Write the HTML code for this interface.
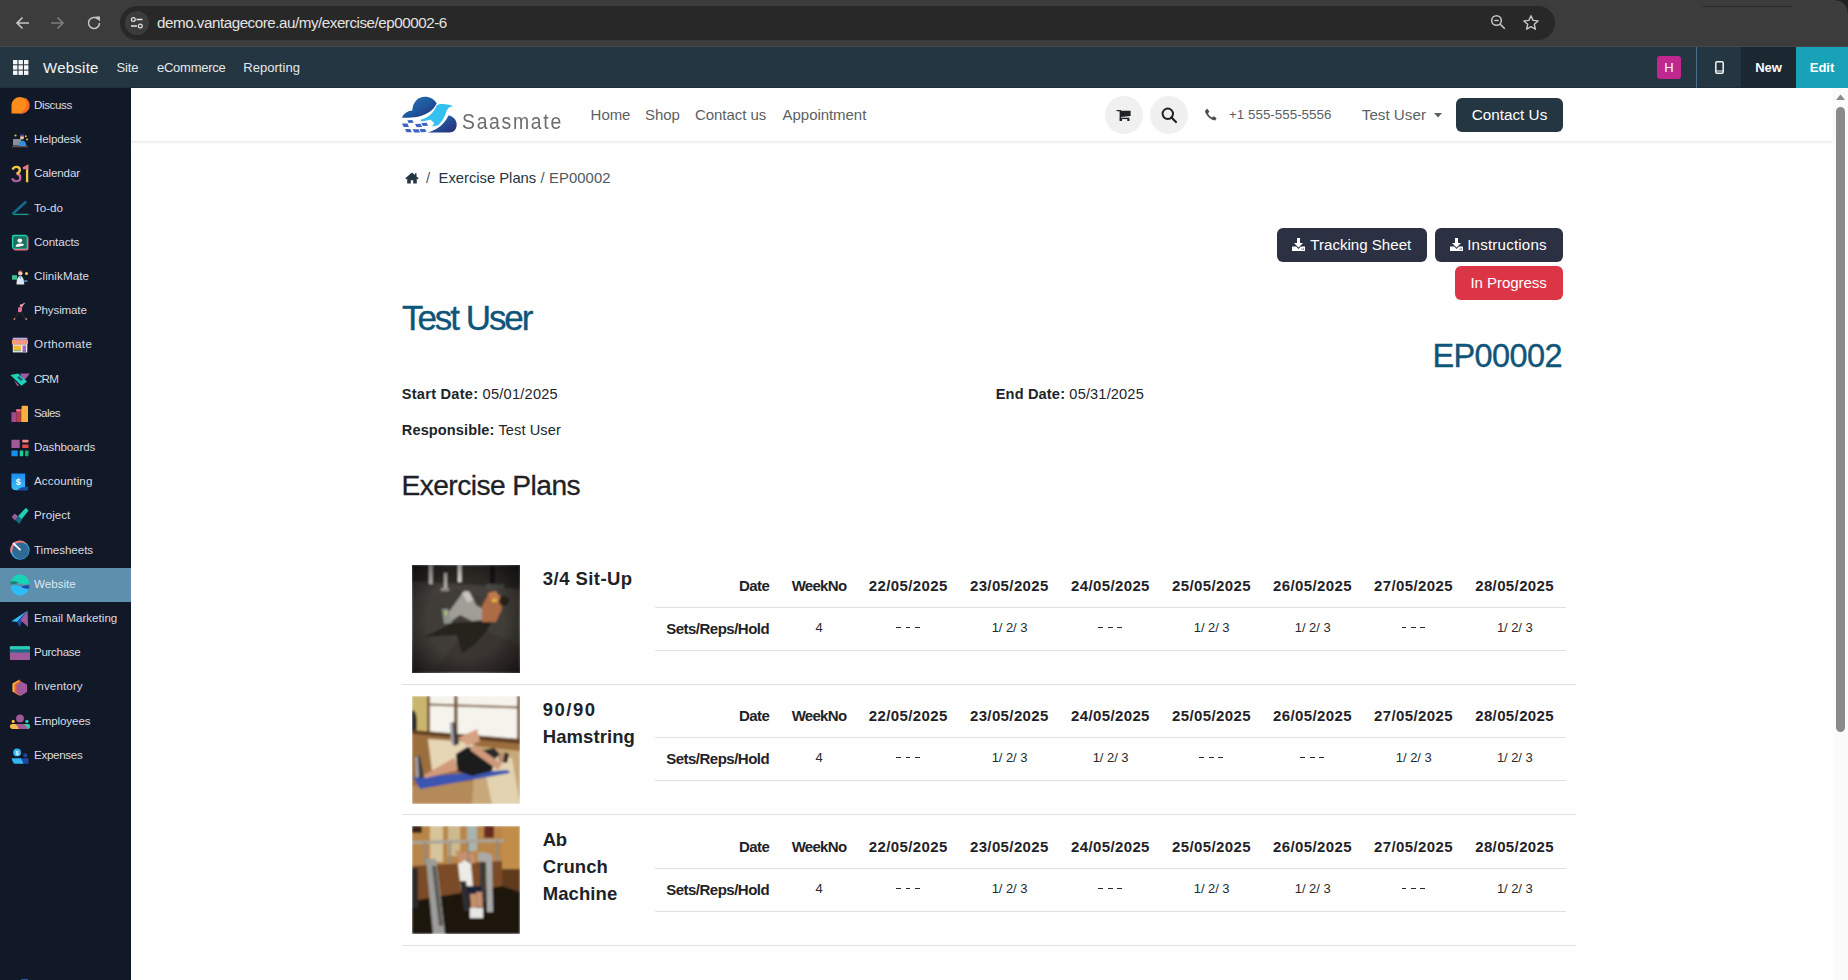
<!DOCTYPE html>
<html><head><meta charset="utf-8"><title>EP00002</title>
<style>
html,body{margin:0;padding:0;}
body{width:1848px;height:980px;overflow:hidden;position:relative;background:#fff;font-family:"Liberation Sans",sans-serif;}
.t{position:absolute;white-space:nowrap;}
.r{position:absolute;display:block;}
b{font-weight:700;}
</style></head><body>
<div class="r" style="left:0px;top:0px;width:1848px;height:47px;background:#3c3c3c;"></div>
<svg class="r" style="left:14px;top:15px;" width="16" height="16" viewBox="0 0 16 16"><path d="M15 8H3M8.5 2.5 3 8l5.5 5.5" fill="none" stroke="#c4c7c5" stroke-width="1.6"/></svg>
<svg class="r" style="left:50px;top:15px;" width="16" height="16" viewBox="0 0 16 16"><path d="M1 8h12M7.5 2.5 13 8l-5.5 5.5" fill="none" stroke="#7b7d7c" stroke-width="1.6"/></svg>
<svg class="r" style="left:86px;top:15px;" width="16" height="16" viewBox="0 0 16 16"><path d="M13.5 8A5.5 5.5 0 1 1 11.9 4.1" fill="none" stroke="#c4c7c5" stroke-width="1.6"/><path d="M9 1.5h5v5z" fill="#c4c7c5"/></svg>
<div class="r" style="left:120px;top:6px;width:1435px;height:34px;background:#282828;border-radius:17px;"></div>
<div class="r" style="left:125px;top:11px;width:24px;height:24px;background:#3c3c3c;border-radius:12px;"></div>
<svg class="r" style="left:130px;top:16px;" width="14" height="14" viewBox="0 0 14 14"><circle cx="3.3" cy="3.5" r="1.9" fill="none" stroke="#e3e3e3" stroke-width="1.2"/><path d="M6.5 3.5h6M1 10h6" stroke="#e3e3e3" stroke-width="1.3"/><circle cx="10.3" cy="10" r="1.9" fill="none" stroke="#e3e3e3" stroke-width="1.2"/></svg>
<div class="t" style="top:14.31px;font-size:15.2px;line-height:18.24px;color:#e3e3e3;letter-spacing:-0.47px;left:157px;">demo.vantagecore.au/my/exercise/ep00002-6</div>
<svg class="r" style="left:1490px;top:14px;" width="17" height="17" viewBox="0 0 17 17"><circle cx="6.5" cy="6.5" r="4.8" fill="none" stroke="#c4c7c5" stroke-width="1.5"/><path d="M4.3 6.5h4.4" stroke="#c4c7c5" stroke-width="1.4"/><path d="M10 10l4.8 4.8" stroke="#c4c7c5" stroke-width="1.6"/></svg>
<svg class="r" style="left:1522px;top:14px;" width="18" height="18" viewBox="0 0 18 18"><path d="M9 1.8l2.1 4.6 5 .5-3.8 3.4 1.1 4.9L9 12.7l-4.4 2.5 1.1-4.9L1.9 6.9l5-.5z" fill="none" stroke="#c4c7c5" stroke-width="1.4" stroke-linejoin="round"/></svg>
<div class="r" style="left:1703px;top:6px;width:89px;height:1px;background:#2a2a2a;"></div>
<div class="r" style="left:1836px;top:0px;width:12px;height:12px;background:radial-gradient(circle at 0 100%, #3c3c3c 11px, #1f2121 12px);"></div>
<div class="r" style="left:0px;top:46px;width:1848px;height:1px;background:#464646;"></div>
<div class="r" style="left:0px;top:47px;width:1848px;height:41px;background:#243642;"></div>
<div class="r" style="left:0px;top:87px;width:1848px;height:1px;background:#1f2e38;"></div>
<svg class="r" style="left:13px;top:60px;" width="16" height="16" viewBox="0 0 16 16"><rect x="0.0" y="0.0" width="4.4" height="4.3" fill="#f4f6f8"/><rect x="5.5" y="0.0" width="4.4" height="4.3" fill="#f4f6f8"/><rect x="11.0" y="0.0" width="4.4" height="4.3" fill="#f4f6f8"/><rect x="0.0" y="5.3" width="4.4" height="4.3" fill="#f4f6f8"/><rect x="5.5" y="5.3" width="4.4" height="4.3" fill="#f4f6f8"/><rect x="11.0" y="5.3" width="4.4" height="4.3" fill="#f4f6f8"/><rect x="0.0" y="10.6" width="4.4" height="4.3" fill="#f4f6f8"/><rect x="5.5" y="10.6" width="4.4" height="4.3" fill="#f4f6f8"/><rect x="11.0" y="10.6" width="4.4" height="4.3" fill="#f4f6f8"/></svg>
<div class="t" style="top:58.80px;font-size:15px;line-height:18.0px;color:#f2f4f6;letter-spacing:0.25px;left:43px;">Website</div>
<div class="t" style="top:60.20px;font-size:13px;line-height:15.6px;color:#e4e8eb;letter-spacing:-0.1px;left:116.5px;">Site</div>
<div class="t" style="top:60.20px;font-size:13px;line-height:15.6px;color:#e4e8eb;letter-spacing:-0.25px;left:157px;">eCommerce</div>
<div class="t" style="top:60.20px;font-size:13px;line-height:15.6px;color:#e4e8eb;letter-spacing:0.05px;left:243.2px;">Reporting</div>
<div class="r" style="left:1657px;top:56px;width:24px;height:23px;background:#c0278f;border-radius:3px;"></div>
<div class="t" style="top:59.70px;font-size:13px;line-height:15.6px;color:#ffffff;left:1657.0px;width:24px;text-align:center;">H</div>
<div class="r" style="left:1696px;top:47px;width:1px;height:41px;background:#4a6f8c;"></div>
<svg class="r" style="left:1715px;top:61px;" width="9" height="13" viewBox="0 0 9 13"><rect x=".8" y=".8" width="7.4" height="11.4" rx="1.2" fill="none" stroke="#f4f4f4" stroke-width="1.5"/><rect x=".8" y="9.5" width="7.4" height="1" fill="#f4f4f4"/><rect x="3.8" y="10.6" width="1.4" height="1" fill="#4aa3e0"/></svg>
<div class="r" style="left:1741px;top:47px;width:55px;height:41px;background:#1c2831;"></div>
<div class="t" style="top:60.20px;font-size:13px;line-height:15.6px;color:#ffffff;font-weight:700;left:1741.0px;width:55px;text-align:center;">New</div>
<div class="r" style="left:1796px;top:47px;width:52px;height:41px;background:#17a2b8;"></div>
<div class="t" style="top:60.20px;font-size:13px;line-height:15.6px;color:#ffffff;font-weight:700;left:1796.0px;width:52px;text-align:center;">Edit</div>
<div class="r" style="left:0px;top:88px;width:131px;height:892px;background:#111827;"></div>
<div class="r" style="left:0px;top:568px;width:131px;height:34px;background:#5e8fad;"></div>
<svg class="r" style="left:0px;top:0px;" width="131" height="800" viewBox="0 0 131 800"><path d="M11.5 113.6V105A8.55 8.3 0 1 1 20 113.6Z" fill="#fb8c1b"/><path d="M24.2 97.6A8.5 8.3 0 0 1 20 113.6H14A11 10 0 0 0 24.2 97.6Z" fill="#f36a22"/><rect x="13" y="139" width="8" height="6.5" fill="#8e8e98"/><circle cx="22" cy="137.6" r="2" fill="#f1c9a8"/><rect x="20" y="134.6" width="4" height="1.8" fill="#5a4a8a"/><path d="M18.5 146.5Q18.5 140.5 22.3 140.5Q26 140.5 26.5 146.5Z" fill="#2f8fe0"/><rect x="12" y="146" width="16" height="1.3" fill="#6b4a3a"/><circle cx="15.5" cy="135.5" r="1.1" fill="#f2b84b"/><circle cx="25.8" cy="136.3" r="1" fill="#f2b84b"/><circle cx="27" cy="139.5" r="1" fill="#f2b84b"/><defs><linearGradient id="cal3" x1="0" y1="0" x2="0" y2="1"><stop offset="0" stop-color="#f7c548"/><stop offset=".45" stop-color="#f7c548"/><stop offset=".55" stop-color="#e8739a"/><stop offset="1" stop-color="#a05aa0"/></linearGradient></defs><path d="M12.6 169.6Q13.4 166.9 16.4 166.9Q19.8 166.9 19.8 169.9Q19.8 172.6 16.6 173.6Q20.3 174.3 20.3 177.5Q20.3 181.2 16.3 181.2Q13 181.2 12.2 178.4" fill="none" stroke="url(#cal3)" stroke-width="2.3"/><path d="M23.3 168.6L27.1 166.5V182.2" fill="none" stroke="#f7c548" stroke-width="2.3"/><path d="M23.3 168.6L27.1 166.5V169.5" fill="none" stroke="#e8739a" stroke-width="2.3"/><path d="M13.2 213.4L25.3 202.2" stroke="#146b86" stroke-width="2.7" stroke-linecap="round"/><path d="M14 214.4H28.5" stroke="#1a9a85" stroke-width="1.4"/><rect x="13.2" y="236" width="15.3" height="14.4" rx="2" fill="#e46f78"/><rect x="11.9" y="234.7" width="15.4" height="14.4" rx="2" fill="#1fd1ae"/><rect x="13.3" y="236.2" width="13.4" height="12.2" rx="1" fill="#1f6e62"/><ellipse cx="19.8" cy="240.6" rx="2.4" ry="2.1" fill="#fff"/><path d="M15.5 246.8Q16 243.6 20 243.6Q24 243.6 24 245Q22 246.8 15.5 246.8Z" fill="#fff"/><rect x="12" y="275.2" width="5" height="4.5" fill="#3fbf8f"/><circle cx="20.3" cy="273.2" r="2.2" fill="#f3c9a8"/><path d="M18 271.6Q20.3 268.9 22.6 271.6Z" fill="#a54a2f"/><path d="M16.5 284.6Q16.5 276.2 20.3 275.7Q24 276.2 24.3 284.6Z" fill="#dfe8f2"/><rect x="19.7" y="276.2" width="1.2" height="2.5" fill="#4aa3e0"/><circle cx="26.5" cy="273.5" r="1.5" fill="#f7cf5a"/><rect x="23.5" y="280.5" width="4" height="1.2" fill="#6ab3e8"/><circle cx="21.3" cy="305.6" r="1.5" fill="#e8a0a0"/><path d="M21.2 306.5L24.6 302.8" stroke="#e89aa8" stroke-width="1.2"/><path d="M18.3 307.2L22.2 307.2L21.6 312.2L17.9 312.2Z" fill="#e870a0"/><path d="M18.6 312L14.6 318.6M20.6 312L25.8 318.6" stroke="#262626" stroke-width="1.7"/><circle cx="14.4" cy="319" r="0.9" fill="#d98a6a"/><circle cx="26.2" cy="319" r="0.9" fill="#d98a6a"/><rect x="12.8" y="337.7" width="14.5" height="2.1" fill="#c2ace6"/><rect x="11.9" y="339.8" width="16.1" height="4.6" fill="#f5a55a"/><rect x="12.6" y="339.8" width="1.6" height="4.6" fill="#f28aa0"/><rect x="15.8" y="339.8" width="1.6" height="4.6" fill="#f28aa0"/><rect x="19" y="339.8" width="1.6" height="4.6" fill="#f28aa0"/><rect x="22.2" y="339.8" width="1.6" height="4.6" fill="#f28aa0"/><rect x="25.4" y="339.8" width="1.6" height="4.6" fill="#f28aa0"/><rect x="12.8" y="344.4" width="14.5" height="8" fill="#f4f0f6"/><rect x="13.5" y="345.5" width="7.5" height="4.8" fill="#f5b835"/><rect x="22.5" y="345.5" width="3.6" height="6.8" fill="#9b6ad0"/><rect x="13.5" y="350.3" width="7.5" height="0.9" fill="#4caf50"/><path d="M20 373.5H29.8L24 381Z" fill="#a05aa0"/><path d="M14 380L19.5 385.7L17 385.7Z" fill="#a05aa0"/><path d="M10.4 375L18 373.5L27 381.6L21.5 385.7Z" fill="#1fd1b5"/><path d="M17 377.6L19 376.1L23 379.6L21 381.1Z" fill="#1e5a8a"/><rect x="11.4" y="412.2" width="4.9" height="9.8" fill="#a24a8a"/><rect x="16.3" y="409.3" width="4.4" height="12.7" fill="#c0395a"/><rect x="16.3" y="409.3" width="4.4" height="2" fill="#f07a8a"/><rect x="20.7" y="408.8" width="1.8" height="13.2" fill="#f26522"/><rect x="21.6" y="405.8" width="6.4" height="16.2" rx=".8" fill="#fbb040"/><rect x="11.4" y="439.7" width="8.3" height="8.3" rx=".8" fill="#a05a9c"/><rect x="22.2" y="439.7" width="6.3" height="2.9" rx=".8" fill="#f58a8a"/><rect x="22.2" y="444.6" width="6.3" height="3.4" rx=".8" fill="#e84a4a"/><rect x="11.4" y="450.5" width="6.4" height="5.8" rx=".8" fill="#1a8ef0"/><rect x="19.7" y="450.5" width="3.5" height="5.8" rx=".8" fill="#1ecc9c"/><rect x="25.1" y="450.5" width="3.4" height="5.8" rx=".8" fill="#12b080"/><defs><linearGradient id="acc" x1="0" y1="0" x2="0" y2="1"><stop offset="0" stop-color="#1a8ef0"/><stop offset="1" stop-color="#3cc0f8"/></linearGradient></defs><path d="M17.8 486.7H28.5L27.5 490.6H17.8Z" fill="#1e4ba0"/><path d="M11.4 473.5H25.1V487Q20 487 17.5 490.3Q11.4 490.6 11.4 486Z" fill="url(#acc)"/><text x="18.2" y="485.2" text-anchor="middle" font-family="Liberation Sans" font-weight="700" font-size="9" fill="#fff">$</text><path d="M11.6 517L14.7 513.4L18.3 516.5L15 520.6Z" fill="#a05a9c"/><path d="M18.1 516L26 507.8L28.6 510.6L21.5 519.6Z" fill="#1fd1b5"/><path d="M15.2 520L18.2 516.2L22 519.5L19.3 523.9Z" fill="#136b85"/><circle cx="20.05" cy="550.3" r="9.5" fill="#2fb8f8"/><path d="M10.6 553A9.5 9.5 0 0 1 26 543L20 550Z" fill="#f07a80"/><circle cx="20.6" cy="550.8" r="8.4" fill="#2e6a94"/><path d="M13.6 543.6L20 549.6" stroke="#fff" stroke-width="1.9" stroke-linecap="round"/><path d="M10.6 584A9.4 9.4 0 0 1 29.4 583.6Q25 585.6 20 583.6T10.6 584z" fill="#19d4b4"/><path d="M10.5 581.8Q14.5 580.5 18.3 582.6Q14.5 584.9 10.6 584z" fill="#1a7f6e"/><path d="M10.6 586Q15 584.4 20 586.4T29.4 586A9.4 9.4 0 0 1 10.6 586z" fill="#2dbdf5"/><path d="M21.2 586.8Q25.5 584.4 29.4 585.6L29.2 588.4Q25 589.6 21.2 586.8z" fill="#1a4aa5"/><path d="M11.4 621.2L27.6 610.4L17 622Z" fill="#35b5f5"/><path d="M17 622L27.6 610.4L19.5 627Z" fill="#1e4ba0"/><path d="M27.6 610.4L28 627L20.5 620Z" fill="#a05a9c"/><rect x="9.9" y="646.2" width="20.1" height="13.7" rx="1" fill="#a05a9c"/><rect x="9.9" y="646.2" width="20.1" height="3.4" rx="1" fill="#1fd1b5"/><rect x="9.9" y="649.5" width="20.1" height="3" fill="#136b85"/><path d="M19.5 679.5L12.4 683.5V691.5L19.5 695.7Z" fill="#fbb040"/><path d="M21 680.5L14.5 684V692.5L21 695.7Z" fill="#f26522"/><path d="M21 681.5L27.1 684.5V692L21 695.7L16.5 693V684.5Z" fill="#a05a9c"/><circle cx="20" cy="718.4" r="3.9" fill="#a05a9c"/><circle cx="13.2" cy="721.4" r="1.6" fill="#fbb945"/><circle cx="26.9" cy="721.4" r="1.7" fill="#1fd1b5"/><rect x="9.9" y="724" width="20" height="4.9" rx="2.4" fill="#fbb945"/><path d="M15.5 724H24Q26.5 725.5 28 728.9H19Q17.5 725.5 15.5 724Z" fill="#a05a9c"/><path d="M24 724H27.5A2.45 2.45 0 0 1 27.5 728.9H28Q26.5 725.5 24 724Z" fill="#1fd1b5"/><circle cx="17.1" cy="752.4" r="3.9" fill="#2fb8f8"/><text x="17.1" y="754.6" text-anchor="middle" font-family="Liberation Sans" font-weight="700" font-size="5.5" fill="#fff">$</text><circle cx="25.3" cy="755.3" r="2" fill="#1e4ba0"/><path d="M11.6 758.3H21Q23 761 23.6 763.8H15Q12.5 763 11.6 758.3Z" fill="#35b5f5"/><path d="M21 758.3H28.5V763.8H23.6Q23 761 21 758.3Z" fill="#1e4ba0"/></svg>
<div class="t" style="top:97.92px;font-size:11.6px;line-height:13.92px;color:#d9dde3;letter-spacing:-0.4px;left:34px;">Discuss</div>
<div class="t" style="top:132.12px;font-size:11.6px;line-height:13.92px;color:#d9dde3;letter-spacing:-0.163px;left:34px;">Helpdesk</div>
<div class="t" style="top:166.32px;font-size:11.6px;line-height:13.92px;color:#d9dde3;letter-spacing:-0.138px;left:34px;">Calendar</div>
<div class="t" style="top:200.52px;font-size:11.6px;line-height:13.92px;color:#d9dde3;letter-spacing:-0.04px;left:34px;">To-do</div>
<div class="t" style="top:234.72px;font-size:11.6px;line-height:13.92px;color:#d9dde3;letter-spacing:-0.05px;left:34px;">Contacts</div>
<div class="t" style="top:268.92px;font-size:11.6px;line-height:13.92px;color:#d9dde3;letter-spacing:0.1px;left:34px;">ClinikMate</div>
<div class="t" style="top:303.12px;font-size:11.6px;line-height:13.92px;color:#d9dde3;letter-spacing:-0.156px;left:34px;">Physimate</div>
<div class="t" style="top:337.32px;font-size:11.6px;line-height:13.92px;color:#d9dde3;letter-spacing:0.389px;left:34px;">Orthomate</div>
<div class="t" style="top:371.52px;font-size:11.6px;line-height:13.92px;color:#d9dde3;letter-spacing:-0.767px;left:34px;">CRM</div>
<div class="t" style="top:405.72px;font-size:11.6px;line-height:13.92px;color:#d9dde3;letter-spacing:-0.62px;left:34px;">Sales</div>
<div class="t" style="top:439.92px;font-size:11.6px;line-height:13.92px;color:#d9dde3;letter-spacing:-0.14px;left:34px;">Dashboards</div>
<div class="t" style="top:474.12px;font-size:11.6px;line-height:13.92px;color:#d9dde3;letter-spacing:0.11px;left:34px;">Accounting</div>
<div class="t" style="top:508.32px;font-size:11.6px;line-height:13.92px;color:#d9dde3;letter-spacing:0.029px;left:34px;">Project</div>
<div class="t" style="top:542.52px;font-size:11.6px;line-height:13.92px;color:#d9dde3;letter-spacing:-0.04px;left:34px;">Timesheets</div>
<div class="t" style="top:576.72px;font-size:11.6px;line-height:13.92px;color:#dfe9f0;left:34px;">Website</div>
<div class="t" style="top:610.92px;font-size:11.6px;line-height:13.92px;color:#d9dde3;letter-spacing:0.013px;left:34px;">Email Marketing</div>
<div class="t" style="top:645.12px;font-size:11.6px;line-height:13.92px;color:#d9dde3;letter-spacing:-0.312px;left:34px;">Purchase</div>
<div class="t" style="top:679.32px;font-size:11.6px;line-height:13.92px;color:#d9dde3;letter-spacing:0.122px;left:34px;">Inventory</div>
<div class="t" style="top:713.52px;font-size:11.6px;line-height:13.92px;color:#d9dde3;letter-spacing:-0.1px;left:34px;">Employees</div>
<div class="t" style="top:747.72px;font-size:11.6px;line-height:13.92px;color:#d9dde3;letter-spacing:-0.3px;left:34px;">Expenses</div>
<div class="r" style="left:21px;top:979px;width:7px;height:1px;background:#2e5c9a;border-radius:2px 2px 0 0;"></div>
<div class="r" style="left:131px;top:88px;width:1702px;height:892px;background:#ffffff;"></div>
<div class="r" style="left:1833px;top:88px;width:15px;height:892px;background:#fbfbfb;"></div>
<svg class="r" style="left:1836px;top:94px;" width="9" height="6" viewBox="0 0 9 6"><path d="M4.5 0.5L9 6H0z" fill="#8a8a8a"/></svg>
<div class="r" style="left:1836px;top:107px;width:9px;height:625px;background:#8a8a8a;border-radius:4.5px;"></div>
<div class="r" style="left:131px;top:88px;width:1702px;height:53px;background:#ffffff;box-shadow:0 1px 2px rgba(0,0,0,.06);border-bottom:1px solid #ececec;"></div>
<svg class="r" style="left:398px;top:92px;" width="64" height="46" viewBox="0 0 64 46"><defs><linearGradient id="lg1" x1="0" y1="0" x2="1" y2="1"><stop offset="0" stop-color="#2f6fb3"/><stop offset=".5" stop-color="#1f5aa0"/><stop offset="1" stop-color="#272a78"/></linearGradient><linearGradient id="lg2" x1="0" y1="0" x2="1" y2="1"><stop offset="0" stop-color="#1f74b8"/><stop offset="1" stop-color="#2a2a78"/></linearGradient></defs><path d="M4 25.8C6 21 10 19 14.3 18.6C14.8 10 20 4.8 27 4.8C32 4.8 36.5 7.5 38.7 11.3C36 17.5 30 22.5 20 24.8C14 25.8 8 26 4 25.8z" fill="url(#lg1)"/><path d="M29.6 40.5C40 38 47 31 50.5 23.5C55 24 58.7 28 58.7 32.5C58.7 37.5 55.5 40.5 51.5 40.5z" fill="url(#lg2)"/><path d="M23 27.5C31 26 36 20 39 13C41 12 44 11.5 47 12.3L49.5 12.5L51 12.8L55 14L51 15.5C49.5 17 48.5 19 47.5 22.3C45 28 42.5 31.5 39.5 33.5L34 34.5L36.3 31.3L32.5 27.5C29 28.5 26 29.3 23 29.5z" fill="#35c1ef"/><path d="M9.3 28.2l5-0.2 1.4 2.7-5 .4zM4 31.5l5.4 0 1.6 3.4-5.3.2zM17 32l5.5-.3 1.8 3.2-5.6.3zM23.3 31l5.3-.2 1.6 3-5.3.3zM7 37l5.3 0 1.5 3.2-5.3 0zM14.5 37.2l6 0 1.7 3.2-6 0zM21.5 37l5.5 0 1.5 3-5.6.2z" fill="#3d66c2"/></svg>
<div class="t" style="top:107.50px;font-size:22.5px;line-height:27.0px;color:#6b6d70;letter-spacing:2.0px;left:462px;transform:scaleX(.86);transform-origin:0 0;">Saasmate</div>
<div class="t" style="top:105.60px;font-size:15px;line-height:18.0px;color:#5c5f63;letter-spacing:-0.05px;left:590.6px;">Home</div>
<div class="t" style="top:105.60px;font-size:15px;line-height:18.0px;color:#5c5f63;letter-spacing:-0.05px;left:645px;">Shop</div>
<div class="t" style="top:105.60px;font-size:15px;line-height:18.0px;color:#5c5f63;letter-spacing:-0.05px;left:695px;">Contact us</div>
<div class="t" style="top:105.60px;font-size:15px;line-height:18.0px;color:#5c5f63;letter-spacing:-0.05px;left:782.6px;">Appointment</div>
<div class="r" style="left:1105px;top:96px;width:38px;height:38px;background:#f0f0f0;border-radius:50%;"></div>
<svg class="r" style="left:1110px;top:102px;" width="28" height="26" viewBox="1110 102 28 26"><path d="M1116.6 110.6H1120.3V120.8" fill="none" stroke="#1f2327" stroke-width="1.4"/><path d="M1120.3 110.8H1130.6V116L1121 117Z" fill="#1f2327"/><rect x="1120.5" y="117.7" width="8.8" height="1.4" fill="#1f2327"/><rect x="1119.8" y="119" width="2.2" height="2" fill="#1f2327"/><rect x="1127.3" y="119" width="2.2" height="2" fill="#1f2327"/></svg>
<div class="r" style="left:1150px;top:96px;width:38px;height:38px;background:#f0f0f0;border-radius:50%;"></div>
<svg class="r" style="left:1161px;top:107px;" width="17" height="17" viewBox="0 0 17 17"><circle cx="6.8" cy="6.8" r="5.2" fill="none" stroke="#1f2226" stroke-width="2"/><path d="M10.5 10.5l4.5 4.5" stroke="#1f2226" stroke-width="2.2" stroke-linecap="round"/></svg>
<svg class="r" style="left:1204px;top:108px;" width="14" height="13" viewBox="0 0 14 13"><path d="M3.2 0.8l2.2 2.6-1.4 2q1.2 2.8 4 4.2l1.9-1.4 2.7 2.1-1.4 2.1Q5 12 1 4 0.8 2.2 3.2 0.8z" fill="#4a4d51"/></svg>
<div class="t" style="top:106.92px;font-size:13.4px;line-height:16.08px;color:#5c5f63;left:1229px;">+1 555-555-5556</div>
<div class="t" style="top:105.61px;font-size:15.2px;line-height:18.24px;color:#5c5f63;left:1361.8px;">Test User</div>
<svg class="r" style="left:1434px;top:113px;" width="8" height="5" viewBox="0 0 8 5"><path d="M0 0h8L4 4.5z" fill="#5c5f63"/></svg>
<div class="r" style="left:1456px;top:98px;width:107px;height:34px;background:#243642;border-radius:6px;"></div>
<div class="t" style="top:105.52px;font-size:15.3px;line-height:18.36px;color:#ffffff;left:1456.0px;width:107px;text-align:center;">Contact Us</div>
<svg class="r" style="left:405px;top:172px;" width="14" height="12" viewBox="0 0 14 12"><path d="M7 0.5L0.3 6.3l1 1.1L2.2 6.6V11.5h3.6V8.2h2.4v3.3h3.6V6.6l.9.8 1-1.1L11.5 4.4V1.2H10v1.9z" fill="#243642"/></svg>
<div class="t" style="top:170.19px;font-size:14.8px;line-height:17.76px;color:#4f5962;left:426px;">/</div>
<div class="t" style="top:170.19px;font-size:14.8px;line-height:17.76px;color:#243642;letter-spacing:-0.02px;left:438.6px;">Exercise Plans</div>
<div class="t" style="top:170.19px;font-size:14.8px;line-height:17.76px;color:#4f5962;letter-spacing:0.1px;left:540.6px;">/ EP00002</div>
<div class="r" style="left:1277px;top:228px;width:150px;height:34px;background:#2c3043;border-radius:6px;"></div>
<svg class="r" style="left:1292px;top:238px;" width="13" height="13" viewBox="0 0 13 13"><path d="M5 0h3v5h3L6.5 9.5 2 5h3z" fill="#fff"/><path d="M0 8.5h4.2L6.5 11 8.8 8.5H13V13H0z" fill="#fff"/><rect x="9.5" y="10.6" width="1" height="1" fill="#2c3043"/><rect x="11" y="10.6" width="1" height="1" fill="#2c3043"/></svg>
<div class="t" style="top:235.91px;font-size:15.1px;line-height:18.12px;color:#ffffff;left:1310.3px;">Tracking Sheet</div>
<div class="r" style="left:1435px;top:228px;width:128px;height:34px;background:#2c3043;border-radius:6px;"></div>
<svg class="r" style="left:1449.5px;top:238px;" width="13" height="13" viewBox="0 0 13 13"><path d="M5 0h3v5h3L6.5 9.5 2 5h3z" fill="#fff"/><path d="M0 8.5h4.2L6.5 11 8.8 8.5H13V13H0z" fill="#fff"/><rect x="9.5" y="10.6" width="1" height="1" fill="#2c3043"/><rect x="11" y="10.6" width="1" height="1" fill="#2c3043"/></svg>
<div class="t" style="top:235.91px;font-size:15.1px;line-height:18.12px;color:#ffffff;letter-spacing:0.2px;left:1467.2px;">Instructions</div>
<div class="r" style="left:1455px;top:266px;width:108px;height:34px;background:#dc3545;border-radius:6px;"></div>
<div class="t" style="top:273.71px;font-size:15.1px;line-height:18.12px;color:#ffffff;letter-spacing:-0.1px;left:1470.5px;">In Progress</div>
<div class="t" style="top:296.67px;font-size:35px;line-height:42.0px;color:#0f5479;letter-spacing:-2.05px;left:402px;-webkit-text-stroke:0.35px #0f5479;">Test User</div>
<div class="t" style="top:336.94px;font-size:32.5px;line-height:39.0px;color:#0f5479;letter-spacing:-0.6px;right:286px;-webkit-text-stroke:0.35px #0f5479;">EP00002</div>
<div class="t" style="top:385.58px;font-size:14.6px;line-height:17.52px;color:#212529;letter-spacing:0.24px;left:401.8px;"><b>Start Date:</b> 05/01/2025</div>
<div class="t" style="top:385.58px;font-size:14.6px;line-height:17.52px;color:#212529;letter-spacing:0.15px;left:995.7px;"><b>End Date:</b> 05/31/2025</div>
<div class="t" style="top:421.68px;font-size:14.6px;line-height:17.52px;color:#212529;letter-spacing:0.09px;left:401.8px;"><b>Responsible:</b> Test User</div>
<div class="t" style="top:469.11px;font-size:28.2px;line-height:33.84px;color:#1e2226;letter-spacing:-0.55px;left:401.4px;-webkit-text-stroke:0.3px #1e2226;">Exercise Plans</div>
<svg class="r" style="left:412px;top:565px;" width="108" height="108" viewBox="0 0 108 108"><defs><radialGradient id="v1" cx=".5" cy=".5" r=".72"><stop offset=".5" stop-color="#000" stop-opacity="0"/><stop offset="1" stop-color="#000" stop-opacity=".7"/></radialGradient><filter id="b1" x="-5%" y="-5%" width="110%" height="110%"><feGaussianBlur stdDeviation=".9"/></filter></defs><g filter="url(#b1)"><rect width="108" height="108" fill="#45413c"/><path d="M0 0H108V24L60 20 0 16z" fill="#2d2a27"/><path d="M0 40L45 24 108 44V108H0z" fill="#403c37"/><path d="M20 108L60 60 108 80V108z" fill="#3a3632"/><rect x="17" y="0" width="3.5" height="19" fill="#d9d6cf"/><rect x="46" y="0" width="3.5" height="17" fill="#d9d6cf"/><rect x="32" y="8" width="3" height="18" fill="#b1aea7"/><rect x="29" y="23" width="8" height="3" fill="#8d8a84"/><rect x="78" y="0" width="5" height="24" fill="#191716"/><path d="M74 19h18v5H74z" fill="#4c4844"/><path d="M12 72L40 58 80 56 75 66 62 80 50 88 45 70z" fill="#26231f"/><path d="M33 52L42 40 52 26 58 27 64 40 71 44 70 55 60 56 48 50 38 57z" fill="#a19d97"/><path d="M50 28l6-2 5 9-5 3z" fill="#c9c5bd"/><path d="M30 44l6 0 4 14-8 1z" fill="#8c918a"/><rect x="33" y="46" width="2" height="4" fill="#a8d040"/><path d="M70 41L77 28 88 30 90 44 84 57 70 57z" fill="#ad6c45"/><path d="M76 28l8-2 4 8-8 3z" fill="#c17a50"/><circle cx="92" cy="36" r="5" fill="#2c2119"/><rect x="80" y="34" width="5" height="3" fill="#e8b83a"/></g><rect width="108" height="108" fill="url(#v1)"/></svg>
<div class="t" style="top:567.99px;font-size:18.5px;line-height:22.2px;color:#1e2327;font-weight:700;letter-spacing:0.45px;left:542.8px;">3/4 Sit-Up</div>
<div class="t" style="top:576.60px;font-size:15px;line-height:18.0px;color:#1f2327;font-weight:700;letter-spacing:-0.55px;right:1078.8px;">Date</div>
<div class="t" style="top:576.60px;font-size:15px;line-height:18.0px;color:#1f2327;font-weight:700;letter-spacing:-0.7px;left:774.0px;width:90px;text-align:center;">WeekNo</div>
<div class="t" style="top:576.60px;font-size:15px;line-height:18.0px;color:#1f2327;font-weight:700;letter-spacing:0.38px;left:858.3px;width:100px;text-align:center;">22/05/2025</div>
<div class="t" style="top:576.60px;font-size:15px;line-height:18.0px;color:#1f2327;font-weight:700;letter-spacing:0.38px;left:959.3499999999999px;width:100px;text-align:center;">23/05/2025</div>
<div class="t" style="top:576.60px;font-size:15px;line-height:18.0px;color:#1f2327;font-weight:700;letter-spacing:0.38px;left:1060.3999999999999px;width:100px;text-align:center;">24/05/2025</div>
<div class="t" style="top:576.60px;font-size:15px;line-height:18.0px;color:#1f2327;font-weight:700;letter-spacing:0.38px;left:1161.4499999999998px;width:100px;text-align:center;">25/05/2025</div>
<div class="t" style="top:576.60px;font-size:15px;line-height:18.0px;color:#1f2327;font-weight:700;letter-spacing:0.38px;left:1262.5px;width:100px;text-align:center;">26/05/2025</div>
<div class="t" style="top:576.60px;font-size:15px;line-height:18.0px;color:#1f2327;font-weight:700;letter-spacing:0.38px;left:1363.55px;width:100px;text-align:center;">27/05/2025</div>
<div class="t" style="top:576.60px;font-size:15px;line-height:18.0px;color:#1f2327;font-weight:700;letter-spacing:0.38px;left:1464.6px;width:100px;text-align:center;">28/05/2025</div>
<div class="r" style="left:655px;top:607px;width:911px;height:1px;background:#dee2e6;"></div>
<div class="t" style="top:619.60px;font-size:15px;line-height:18.0px;color:#1f2327;font-weight:700;letter-spacing:-0.5px;right:1078.8px;">Sets/Reps/Hold</div>
<div class="t" style="top:620.40px;font-size:13px;line-height:15.6px;color:#25292d;left:799.0px;width:40px;text-align:center;">4</div>
<div class="r" style="left:896.25px;top:627px;width:4.7999999999999545px;height:1px;background:#25292d;"></div>
<div class="r" style="left:905.7px;top:627px;width:4.7999999999999545px;height:1px;background:#25292d;"></div>
<div class="r" style="left:915.15px;top:627px;width:4.800000000000068px;height:1px;background:#25292d;"></div>
<div class="t" style="top:620.40px;font-size:13px;line-height:15.6px;color:#25292d;letter-spacing:-0.05px;left:979.55px;width:60px;text-align:center;">1/ 2/ 3</div>
<div class="r" style="left:1098.35px;top:627px;width:4.800000000000182px;height:1px;background:#25292d;"></div>
<div class="r" style="left:1107.8px;top:627px;width:4.7999999999999545px;height:1px;background:#25292d;"></div>
<div class="r" style="left:1117.25px;top:627px;width:4.7999999999999545px;height:1px;background:#25292d;"></div>
<div class="t" style="top:620.40px;font-size:13px;line-height:15.6px;color:#25292d;letter-spacing:-0.05px;left:1181.6499999999999px;width:60px;text-align:center;">1/ 2/ 3</div>
<div class="t" style="top:620.40px;font-size:13px;line-height:15.6px;color:#25292d;letter-spacing:-0.05px;left:1282.7px;width:60px;text-align:center;">1/ 2/ 3</div>
<div class="r" style="left:1401.5px;top:627px;width:4.7999999999999545px;height:1px;background:#25292d;"></div>
<div class="r" style="left:1410.95px;top:627px;width:4.7999999999999545px;height:1px;background:#25292d;"></div>
<div class="r" style="left:1420.4px;top:627px;width:4.7999999999999545px;height:1px;background:#25292d;"></div>
<div class="t" style="top:620.40px;font-size:13px;line-height:15.6px;color:#25292d;letter-spacing:-0.05px;left:1484.8px;width:60px;text-align:center;">1/ 2/ 3</div>
<div class="r" style="left:655px;top:650px;width:911px;height:1px;background:#dee2e6;"></div>
<div class="r" style="left:402px;top:684px;width:1174px;height:1px;background:#dee2e6;"></div>
<svg class="r" style="left:412px;top:696px;" width="108" height="108" viewBox="0 0 108 108"><defs><filter id="b2" x="-5%" y="-5%" width="110%" height="110%"><feGaussianBlur stdDeviation=".8"/></filter></defs><g filter="url(#b2)"><rect width="108" height="108" fill="#a57a48"/><rect x="0" y="0" width="16" height="38" fill="#c9b56e"/><path d="M0 14q5 0 5 13t-5 13z" fill="#2a2826"/><path d="M16 0H108V46L16 36z" fill="#f4f3ec"/><path d="M15 0h3v36h-3zM42 0h3.5v38H42zM105 0h3v46h-3z" fill="#7d5a3a"/><path d="M16 7.5L108 10.5V12.5L16 9.5z" fill="#7d5a3a"/><path d="M0 34L108 43V48L0 38z" fill="#5e3c22"/><path d="M0 38L108 48V108H0z" fill="#9c6e3e"/><path d="M16 43L60 46 70 70 20 75z" fill="#e6d6b6"/><path d="M62 50L108 55V108H60z" fill="#c8a878"/><path d="M70 60L100 62 108 108 80 108z" fill="#e3d3b0"/><path d="M0 90L60 85 60 108H0z" fill="#b48a58"/><path d="M1 81L96 74 98 77 8 93z" fill="#3a55b0"/><path d="M44 58L55 51 72 54 84 59 80 75 60 80 45 75z" fill="#1c1c1e"/><path d="M72 54l10-2 6 6-6 6z" fill="#2a2a2a"/><path d="M10 80L42 62 46 74 14 82z" fill="#d29a7a"/><path d="M46 42L65 33 68 45 56 50z" fill="#d6a284"/><path d="M62 48L90 68 86 74 58 54z" fill="#cf9a7c"/><circle cx="91" cy="62" r="5" fill="#b98a6e"/><path d="M93 56l4 2-2 9-4-1z" fill="#2a2020"/><path d="M38 27l5-1 4 22-5 2z" fill="#3a3a3c"/><path d="M38 27l3 0 1 20-3 1z" fill="#a0a0a6"/><path d="M3 61l5-1 4 21-5 2z" fill="#3a3a3c"/><path d="M3 61l3 0 1 20-3 1z" fill="#a0a0a6"/></g></svg>
<div class="t" style="top:698.99px;font-size:18.5px;line-height:22.2px;color:#1e2327;font-weight:700;letter-spacing:1.5px;left:542.8px;">90/90</div>
<div class="t" style="top:725.99px;font-size:18.5px;line-height:22.2px;color:#1e2327;font-weight:700;letter-spacing:0.07px;left:542.8px;">Hamstring</div>
<div class="t" style="top:706.60px;font-size:15px;line-height:18.0px;color:#1f2327;font-weight:700;letter-spacing:-0.55px;right:1078.8px;">Date</div>
<div class="t" style="top:706.60px;font-size:15px;line-height:18.0px;color:#1f2327;font-weight:700;letter-spacing:-0.7px;left:774.0px;width:90px;text-align:center;">WeekNo</div>
<div class="t" style="top:706.60px;font-size:15px;line-height:18.0px;color:#1f2327;font-weight:700;letter-spacing:0.38px;left:858.3px;width:100px;text-align:center;">22/05/2025</div>
<div class="t" style="top:706.60px;font-size:15px;line-height:18.0px;color:#1f2327;font-weight:700;letter-spacing:0.38px;left:959.3499999999999px;width:100px;text-align:center;">23/05/2025</div>
<div class="t" style="top:706.60px;font-size:15px;line-height:18.0px;color:#1f2327;font-weight:700;letter-spacing:0.38px;left:1060.3999999999999px;width:100px;text-align:center;">24/05/2025</div>
<div class="t" style="top:706.60px;font-size:15px;line-height:18.0px;color:#1f2327;font-weight:700;letter-spacing:0.38px;left:1161.4499999999998px;width:100px;text-align:center;">25/05/2025</div>
<div class="t" style="top:706.60px;font-size:15px;line-height:18.0px;color:#1f2327;font-weight:700;letter-spacing:0.38px;left:1262.5px;width:100px;text-align:center;">26/05/2025</div>
<div class="t" style="top:706.60px;font-size:15px;line-height:18.0px;color:#1f2327;font-weight:700;letter-spacing:0.38px;left:1363.55px;width:100px;text-align:center;">27/05/2025</div>
<div class="t" style="top:706.60px;font-size:15px;line-height:18.0px;color:#1f2327;font-weight:700;letter-spacing:0.38px;left:1464.6px;width:100px;text-align:center;">28/05/2025</div>
<div class="r" style="left:655px;top:737px;width:911px;height:1px;background:#dee2e6;"></div>
<div class="t" style="top:749.60px;font-size:15px;line-height:18.0px;color:#1f2327;font-weight:700;letter-spacing:-0.5px;right:1078.8px;">Sets/Reps/Hold</div>
<div class="t" style="top:750.40px;font-size:13px;line-height:15.6px;color:#25292d;left:799.0px;width:40px;text-align:center;">4</div>
<div class="r" style="left:896.25px;top:757px;width:4.7999999999999545px;height:1px;background:#25292d;"></div>
<div class="r" style="left:905.7px;top:757px;width:4.7999999999999545px;height:1px;background:#25292d;"></div>
<div class="r" style="left:915.15px;top:757px;width:4.800000000000068px;height:1px;background:#25292d;"></div>
<div class="t" style="top:750.40px;font-size:13px;line-height:15.6px;color:#25292d;letter-spacing:-0.05px;left:979.55px;width:60px;text-align:center;">1/ 2/ 3</div>
<div class="t" style="top:750.40px;font-size:13px;line-height:15.6px;color:#25292d;letter-spacing:-0.05px;left:1080.6px;width:60px;text-align:center;">1/ 2/ 3</div>
<div class="r" style="left:1199.4px;top:757px;width:4.7999999999999545px;height:1px;background:#25292d;"></div>
<div class="r" style="left:1208.85px;top:757px;width:4.800000000000182px;height:1px;background:#25292d;"></div>
<div class="r" style="left:1218.3px;top:757px;width:4.7999999999999545px;height:1px;background:#25292d;"></div>
<div class="r" style="left:1300.45px;top:757px;width:4.7999999999999545px;height:1px;background:#25292d;"></div>
<div class="r" style="left:1309.9px;top:757px;width:4.7999999999999545px;height:1px;background:#25292d;"></div>
<div class="r" style="left:1319.35px;top:757px;width:4.800000000000182px;height:1px;background:#25292d;"></div>
<div class="t" style="top:750.40px;font-size:13px;line-height:15.6px;color:#25292d;letter-spacing:-0.05px;left:1383.75px;width:60px;text-align:center;">1/ 2/ 3</div>
<div class="t" style="top:750.40px;font-size:13px;line-height:15.6px;color:#25292d;letter-spacing:-0.05px;left:1484.8px;width:60px;text-align:center;">1/ 2/ 3</div>
<div class="r" style="left:655px;top:780px;width:911px;height:1px;background:#dee2e6;"></div>
<div class="r" style="left:402px;top:814px;width:1174px;height:1px;background:#dee2e6;"></div>
<svg class="r" style="left:412px;top:826px;" width="108" height="108" viewBox="0 0 108 108"><defs><filter id="b3" x="-5%" y="-5%" width="110%" height="110%"><feGaussianBlur stdDeviation=".9"/></filter></defs><g filter="url(#b3)"><rect width="108" height="108" fill="#9a6632"/><rect width="108" height="40" fill="#b9864a"/><rect x="18" y="0" width="13" height="36" fill="#d6c49a"/><rect x="36" y="0" width="12" height="30" fill="#cdb98e"/><rect x="55" y="0" width="10" height="25" fill="#a9b4ae"/><rect x="72" y="0" width="10" height="12" fill="#6a2a22"/><rect x="90" y="0" width="18" height="45" fill="#c28c48"/><rect x="0" y="0" width="10" height="7" fill="#3a2418"/><path d="M0 15L92 13V16L0 18z" fill="#a8a49a"/><path d="M12 16h2v50h-2zM37 16h2v36h-2zM55 16h2v30h-2zM84 14h2v34h-2z" fill="#8d8a80"/><path d="M0 40L90 35V60L0 75z" fill="#7a4c26"/><path d="M90 43h18v23H90z" fill="#5e3a1e"/><path d="M0 75L90 60 108 66V108H0z" fill="#1d1410"/><path d="M14 33L24 33 33 108 21 108z" fill="#9c9c9a"/><path d="M20 40l4 0 7 60-4 0z" fill="#5a5a58"/><path d="M0 42h6v40H0z" fill="#2a2a2a"/><path d="M66 27q7-2 14 2l1 57-6 0-1-50-8-1z" fill="#a9a9a7"/><path d="M68 36h6v40h-6z" fill="#3a3a38"/><path d="M46 38l6-4 7 4 2 24-12 2z" fill="#ecebe6"/><circle cx="52" cy="30" r="4" fill="#c4906e"/><path d="M43 25l4-1 4 12-3 1zM57 28l5-1 1 10-4 1z" fill="#c4906e"/><path d="M52 60l17 0 2 11-16 3z" fill="#1a2238"/><path d="M58 68l6 0 1 15-6 0zM64 66l6 0 1 15-6 0z" fill="#c4906e"/><path d="M58 82h13v10H58z" fill="#e6e6e4"/><path d="M48 55l6 0 4 30-6 0z" fill="#2e2e30"/></g></svg>
<div class="t" style="top:828.99px;font-size:18.5px;line-height:22.2px;color:#1e2327;font-weight:700;letter-spacing:-0.5px;left:542.8px;">Ab</div>
<div class="t" style="top:855.99px;font-size:18.5px;line-height:22.2px;color:#1e2327;font-weight:700;letter-spacing:0.05px;left:542.8px;">Crunch</div>
<div class="t" style="top:882.99px;font-size:18.5px;line-height:22.2px;color:#1e2327;font-weight:700;letter-spacing:0.06px;left:542.8px;">Machine</div>
<div class="t" style="top:837.60px;font-size:15px;line-height:18.0px;color:#1f2327;font-weight:700;letter-spacing:-0.55px;right:1078.8px;">Date</div>
<div class="t" style="top:837.60px;font-size:15px;line-height:18.0px;color:#1f2327;font-weight:700;letter-spacing:-0.7px;left:774.0px;width:90px;text-align:center;">WeekNo</div>
<div class="t" style="top:837.60px;font-size:15px;line-height:18.0px;color:#1f2327;font-weight:700;letter-spacing:0.38px;left:858.3px;width:100px;text-align:center;">22/05/2025</div>
<div class="t" style="top:837.60px;font-size:15px;line-height:18.0px;color:#1f2327;font-weight:700;letter-spacing:0.38px;left:959.3499999999999px;width:100px;text-align:center;">23/05/2025</div>
<div class="t" style="top:837.60px;font-size:15px;line-height:18.0px;color:#1f2327;font-weight:700;letter-spacing:0.38px;left:1060.3999999999999px;width:100px;text-align:center;">24/05/2025</div>
<div class="t" style="top:837.60px;font-size:15px;line-height:18.0px;color:#1f2327;font-weight:700;letter-spacing:0.38px;left:1161.4499999999998px;width:100px;text-align:center;">25/05/2025</div>
<div class="t" style="top:837.60px;font-size:15px;line-height:18.0px;color:#1f2327;font-weight:700;letter-spacing:0.38px;left:1262.5px;width:100px;text-align:center;">26/05/2025</div>
<div class="t" style="top:837.60px;font-size:15px;line-height:18.0px;color:#1f2327;font-weight:700;letter-spacing:0.38px;left:1363.55px;width:100px;text-align:center;">27/05/2025</div>
<div class="t" style="top:837.60px;font-size:15px;line-height:18.0px;color:#1f2327;font-weight:700;letter-spacing:0.38px;left:1464.6px;width:100px;text-align:center;">28/05/2025</div>
<div class="r" style="left:655px;top:868px;width:911px;height:1px;background:#dee2e6;"></div>
<div class="t" style="top:880.60px;font-size:15px;line-height:18.0px;color:#1f2327;font-weight:700;letter-spacing:-0.5px;right:1078.8px;">Sets/Reps/Hold</div>
<div class="t" style="top:881.40px;font-size:13px;line-height:15.6px;color:#25292d;left:799.0px;width:40px;text-align:center;">4</div>
<div class="r" style="left:896.25px;top:888px;width:4.7999999999999545px;height:1px;background:#25292d;"></div>
<div class="r" style="left:905.7px;top:888px;width:4.7999999999999545px;height:1px;background:#25292d;"></div>
<div class="r" style="left:915.15px;top:888px;width:4.800000000000068px;height:1px;background:#25292d;"></div>
<div class="t" style="top:881.40px;font-size:13px;line-height:15.6px;color:#25292d;letter-spacing:-0.05px;left:979.55px;width:60px;text-align:center;">1/ 2/ 3</div>
<div class="r" style="left:1098.35px;top:888px;width:4.800000000000182px;height:1px;background:#25292d;"></div>
<div class="r" style="left:1107.8px;top:888px;width:4.7999999999999545px;height:1px;background:#25292d;"></div>
<div class="r" style="left:1117.25px;top:888px;width:4.7999999999999545px;height:1px;background:#25292d;"></div>
<div class="t" style="top:881.40px;font-size:13px;line-height:15.6px;color:#25292d;letter-spacing:-0.05px;left:1181.6499999999999px;width:60px;text-align:center;">1/ 2/ 3</div>
<div class="t" style="top:881.40px;font-size:13px;line-height:15.6px;color:#25292d;letter-spacing:-0.05px;left:1282.7px;width:60px;text-align:center;">1/ 2/ 3</div>
<div class="r" style="left:1401.5px;top:888px;width:4.7999999999999545px;height:1px;background:#25292d;"></div>
<div class="r" style="left:1410.95px;top:888px;width:4.7999999999999545px;height:1px;background:#25292d;"></div>
<div class="r" style="left:1420.4px;top:888px;width:4.7999999999999545px;height:1px;background:#25292d;"></div>
<div class="t" style="top:881.40px;font-size:13px;line-height:15.6px;color:#25292d;letter-spacing:-0.05px;left:1484.8px;width:60px;text-align:center;">1/ 2/ 3</div>
<div class="r" style="left:655px;top:911px;width:911px;height:1px;background:#dee2e6;"></div>
<div class="r" style="left:402px;top:945px;width:1174px;height:1px;background:#dee2e6;"></div>
</body></html>
